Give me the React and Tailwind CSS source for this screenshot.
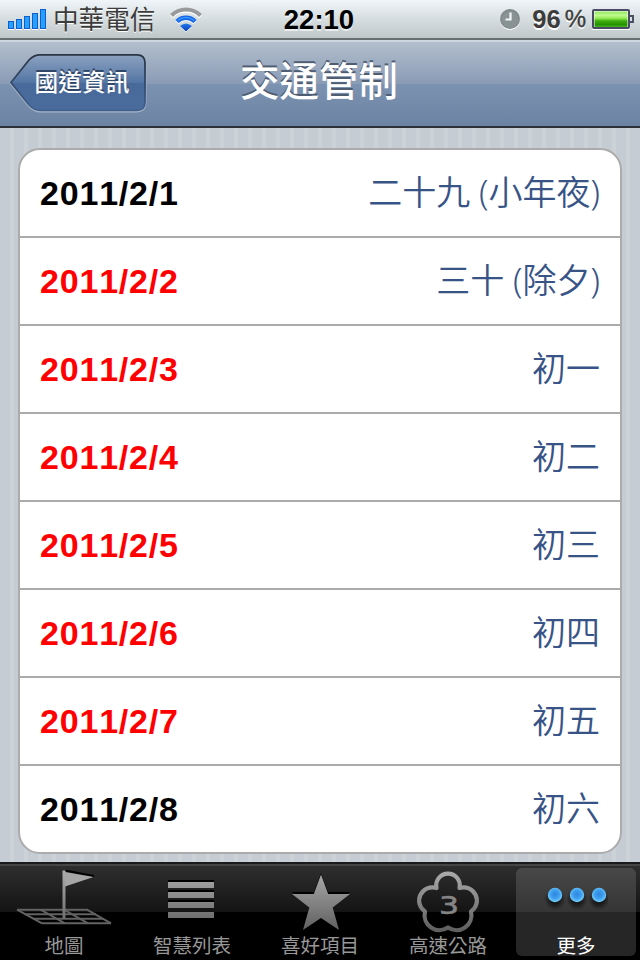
const days = [
  { date: '2011/2/1', lunar: '二十九 (小年夜)', holiday: false },
  { date: '2011/2/2', lunar: '三十 (除夕)', holiday: true },
  { date: '2011/2/3', lunar: '初一', holiday: true },
  { date: '2011/2/4', lunar: '初二', holiday: true },
  { date: '2011/2/5', lunar: '初三', holiday: true },
  { date: '2011/2/6', lunar: '初四', holiday: true },
  { date: '2011/2/7', lunar: '初五', holiday: true },
  { date: '2011/2/8', lunar: '初六', holiday: false },
];

const SignalIcon = () => (
  <svg width="40" height="22" viewBox="0 0 40 22">
    {[8, 10, 13, 16, 20].map((h, i) => (
      <g key={h}>
        <rect x={i * 8} y={21 - h} width="6" height={h} fill="#fff" />
        <rect x={i * 8} y={20 - h} width="6" height={h} fill="#0d5fd0" />
        <rect x={i * 8 + 1} y={21 - h} width="4" height={h - 2} fill="#26a0fb" />
      </g>
    ))}
  </svg>
);

const WifiIcon = () => (
  <svg width="34" height="26" viewBox="0 0 34 26" fill="none">
    <defs>
      <linearGradient id="wifi" x1="0" y1="15" x2="0" y2="24" gradientUnits="userSpaceOnUse">
        <stop offset="0" stopColor="#2a86fa" />
        <stop offset="1" stopColor="#0840b8" />
      </linearGradient>
    </defs>
    <path d="M2.5 9.8 A20.5 20.5 0 0 1 31.5 9.8" stroke="#fff" strokeWidth="4" />
    <path d="M2.5 8.5 A20.5 20.5 0 0 1 31.5 8.5" stroke="#999a9b" strokeWidth="4" />
    <path d="M8 15.5 A12.8 12.8 0 0 1 26 15.5" stroke="#fff" strokeWidth="4.4" />
    <path d="M8 14.5 A12.8 12.8 0 0 1 26 14.5" stroke="#1264e8" strokeWidth="4.4" />
    <path d="M8.7 13.8 A12 12 0 0 1 25.3 13.8" stroke="#3a96fa" strokeWidth="1.5" />
    <path d="M17 25.5 L11 19.5 Q17 14.5 23 19.5 Z" fill="#fff" />
    <path d="M17 24.5 L11 19 Q17 14 23 19 Z" fill="url(#wifi)" />
  </svg>
);

const AlarmIcon = () => (
  <svg width="22" height="22" viewBox="0 0 22 22">
    <circle cx="11" cy="12" r="10" fill="#fff" />
    <circle cx="11" cy="11" r="10" fill="#7f898a" />
    <circle cx="11" cy="11.5" r="8.5" fill="#899394" />
    <path d="M11.5 4.5 V11.5 H6.5" stroke="#f4f7f7" strokeWidth="2.2" fill="none" />
  </svg>
);

const BatteryIcon = () => (
  <svg width="42" height="22" viewBox="0 0 42 22">
    <defs>
      <linearGradient id="charge" x1="0" y1="0" x2="0" y2="1">
        <stop offset="0" stopColor="#8fe85a" />
        <stop offset="0.25" stopColor="#c0fa90" />
        <stop offset="0.45" stopColor="#8fe850" />
        <stop offset="0.6" stopColor="#3fae10" />
        <stop offset="0.85" stopColor="#249000" />
        <stop offset="1" stopColor="#43b81c" />
      </linearGradient>
    </defs>
    <rect x="0" y="2" width="38" height="19" rx="1.5" fill="#fff" />
    <rect x="1" y="1" width="36" height="18" rx="1" fill="#fff" stroke="#4b4a64" strokeWidth="2" />
    <rect x="2.5" y="2.5" width="33" height="15.5" fill="url(#charge)" />
    <path d="M38 7 H41 V13 H38" fill="none" stroke="#4b4f64" strokeWidth="2" />
  </svg>
);

const StatusBar = () => (
  <header className="flex h-10 items-start justify-between border-b-2 border-[#66716f] bg-linear-to-b from-[#eff5f8] to-[#bfc7c9] px-2">
    <div className="flex w-[276px] items-start">
      <div className="pt-[9px]">
        <SignalIcon />
      </div>
      <span className="ml-[5px] pt-1 text-[25.6px] leading-8 text-[#3c3c3c] [text-shadow:0_1px_0_#fff]">中華電信</span>
      <div className="ml-[14px] pt-[7px]">
        <WifiIcon />
      </div>
    </div>
    <time className="-ml-0.5 pt-1 text-[27.5px] leading-8 font-bold text-black [text-shadow:0_2px_0_#fff9]">22:10</time>
    <div className="flex w-[276px] items-start justify-end">
      <div className="pt-[8px]">
        <AlarmIcon />
      </div>
      <span className="ml-[11px] pt-[3px] text-[25.5px] leading-8 font-bold text-[#3c3c3c] [text-shadow:0_2px_0_#fff]">96</span>
      <span className="ml-1 pt-[3px] text-[24px] leading-8 text-[#3c3c3c] [text-shadow:0_2px_0_#fff] [-webkit-text-stroke:0.4px_#3c3c3c]">%</span>
      <div className="-mr-[2px] ml-[6px] pt-[9px]">
        <BatteryIcon />
      </div>
    </div>
  </header>
);

const BackButton = () => (
  <button className="relative block h-[60px] w-[138px] shrink-0">
    <svg className="absolute inset-0" width="138" height="60" viewBox="0 0 138 60">
      <defs>
        <linearGradient id="back" x1="0" y1="0" x2="0" y2="1">
          <stop offset="0" stopColor="#8ca2c0" />
          <stop offset="0.5" stopColor="#5375a4" />
          <stop offset="0.51" stopColor="#486a9b" />
          <stop offset="1" stopColor="#4a6c9c" />
        </linearGradient>
        <linearGradient id="backEdge" x1="0" y1="0" x2="0" y2="1">
          <stop offset="0" stopColor="#2b3442" />
          <stop offset="0.5" stopColor="#34496a" />
          <stop offset="1" stopColor="#41618f" />
        </linearGradient>
      </defs>
      <path d="M2 31 L20 8 Q25 2.5 31 2.5 H127 Q136.5 2.5 136.5 12 V49 Q136.5 58.5 127 58.5 H31 Q25 58.5 20 53 Z" fill="none" stroke="#a5b3c7" strokeWidth="2" />
      <path d="M2 29.5 L20 7 Q25 1.8 31 1.8 H128 Q136 1.8 136 10 V49 Q136 57.3 128 57.3 H31 Q25 57.3 20 52 Z" fill="url(#back)" stroke="url(#backEdge)" strokeWidth="1.8" />
    </svg>
    <span className="relative -ml-px block pl-[9px] text-[23.7px] leading-8 font-medium text-white [text-shadow:0_-2px_0_#2f4666]">國道資訊</span>
  </button>
);

const NavBar = () => (
  <nav className="flex h-[88px] border-b-2 border-[#2d3034] bg-[linear-gradient(#b4c0ce,#8a9bb5_44px,#7c92b1_44px,#6d83a3)] px-[9px] [box-shadow:inset_0_2px_0_#cdd5df]">
    <div className="w-[180px] pt-[13px]">
      <BackButton />
    </div>
    <h1 className="grow pt-[15px] text-center text-[39.5px] leading-[54px] font-medium text-white [text-shadow:0_-2px_0_#4f5d72]">交通管制</h1>
    <div className="w-[182px]" />
  </nav>
);

const FlagIcon = () => (
  <svg width="98" height="60" viewBox="0 0 98 60">
    <g stroke="#626262" strokeWidth="1.9" fill="none">
      <path d="M2 39.7 H73 M10 44.2 H81 M18 48.7 H88 M27 53.3 H96" />
      <path d="M2 39.7 L27 53.3 M25.5 39.7 L50 53.3 M49 39.7 L73 53.3 M72 39.7 L96 53.3" />
    </g>
    <path d="M50 0.5 L79 6" stroke="#000" strokeWidth="2" />
    <rect x="47.5" y="0.5" width="3" height="48" fill="url(#tabIcon)" />
    <path d="M50 2 L78.5 7 L50 16.5 Z" fill="#a6a6a6" />
  </svg>
);

const ListIcon = () => (
  <svg width="48" height="60" viewBox="0 0 48 60">
    <g fill="#000">
      <rect x="0" y="10" width="46" height="3" />
      <rect x="0" y="20" width="46" height="3" />
      <rect x="0" y="30" width="46" height="3" />
    </g>
    <path d="M0 12 H46 V18 H0 Z M0 22 H46 V28 H0 Z M0 32 H46 V38 H0 Z M0 42 H46 V48 H0 Z" fill="url(#tabIcon)" />
  </svg>
);

const StarIcon = () => (
  <svg className="ml-0.5" width="60" height="60" viewBox="0 0 60 60">
    <path d="M30 3 L37 22 H59 L41.5 36 L48 58 L30 46 L12 58 L18.5 36 L1 22 H23 Z" fill="#000" />
    <path d="M30 4.5 L37.2 24 H59 L41.7 37.5 L48 60 L30 48 L12 60 L18.3 37.5 L1 24 H22.8 Z" fill="url(#tabIcon)" />
  </svg>
);

const FlowerIcon = () => (
  <svg width="66" height="64" viewBox="0 0 66 64">
    <path
      d="M21.5 18 A11.8 11.8 0 1 1 44.5 18 A13.2 13.2 0 0 1 56 41.5 A15 15 0 0 1 33 57.5 A15 15 0 0 1 10 41.5 A13.2 13.2 0 0 1 21.5 18 Z"
      fill="none"
      stroke="url(#tabIcon)"
      strokeWidth="4.2"
      strokeLinejoin="round"
    />
    <text x="34" y="43.5" textAnchor="middle" fill="#858585" fontSize="25" fontFamily="DejaVu Sans" textLength="20" lengthAdjust="spacingAndGlyphs" stroke="#858585" strokeWidth="0.6">3</text>
  </svg>
);

const MoreIcon = () => (
  <svg width="64" height="60" viewBox="0 0 64 60">
    <defs>
      <radialGradient id="dot" cx="0.5" cy="0.45" r="0.6">
        <stop offset="0" stopColor="#2f86e2" />
        <stop offset="0.5" stopColor="#3f9fee" />
        <stop offset="1" stopColor="#7fdcff" />
      </radialGradient>
      <radialGradient id="dotShadow">
        <stop offset="0" stopColor="#000" />
        <stop offset="1" stopColor="#000" stopOpacity="0" />
      </radialGradient>
    </defs>
    {[11, 33, 55].map((x) => (
      <g key={x}>
        <circle cx={x} cy="29" r="11" fill="url(#dotShadow)" />
        <circle cx={x} cy="25" r="7.2" fill="url(#dot)" />
      </g>
    ))}
  </svg>
);

const tabs = [
  { label: '地圖', icon: <FlagIcon /> },
  { label: '智慧列表', icon: <ListIcon /> },
  { label: '喜好項目', icon: <StarIcon /> },
  { label: '高速公路', icon: <FlowerIcon /> },
  { label: '更多', icon: <MoreIcon />, active: true },
];

const TabBar = () => (
  <footer className="flex h-[98px] border-t-2 border-[#1a1a1c] bg-[linear-gradient(#464444_0_2px,#2e2e2e_2px,#141414_48px,#000_48px)]">
    {/* Shared vertical shading for the grey tab icons */}
    <svg className="absolute" width="0" height="0">
      <defs>
        <linearGradient id="tabIcon" x1="0" y1="0" x2="0" y2="60" gradientUnits="userSpaceOnUse">
          <stop offset="0" stopColor="#adadad" />
          <stop offset="1" stopColor="#606060" />
        </linearGradient>
      </defs>
    </svg>
    {tabs.map((tab) => (
      <div key={tab.label} className="w-32 px-1 pt-1">
        <div
          className={
            tab.active
              ? 'flex h-[88px] flex-col items-center rounded-md bg-[linear-gradient(#484848,#353535_44px,#262626_44px)] text-white'
              : 'flex h-[88px] flex-col items-center text-[#989898]'
          }
        >
          <div className="flex h-[65px] shrink-0 items-start justify-center pt-0.5">{tab.icon}</div>
          <span className="text-[19.5px] leading-[26px] whitespace-nowrap">{tab.label}</span>
        </div>
      </div>
    ))}
  </footer>
);

const App = () => {
  return (
    <div className="flex h-[960px] w-[640px] flex-col overflow-hidden bg-black font-['Liberation_Sans','Noto_Sans_CJK_TC',sans-serif]">
      <StatusBar />
      <NavBar />
      <main className="grow bg-[repeating-linear-gradient(90deg,#c5ccd4_0_10px,#cbd2d8_10px_14px)] px-[18px] pt-5">
        <ul className="divide-y-2 divide-[#ababab] overflow-hidden rounded-[22px] border-2 border-[#ababab] bg-white">
          {days.map((day, i) => (
            <li
              key={day.date}
              className={
                i === days.length - 1
                  ? 'flex h-[86px] items-center justify-between px-5 text-[34px]'
                  : 'flex h-[88px] items-center justify-between px-5 text-[34px]'
              }
            >
              <span
                className={
                  day.holiday
                    ? 'font-bold tracking-[0.8px] text-[#ff0000] [font-kerning:none]'
                    : 'font-bold tracking-[0.8px] text-black [font-kerning:none]'
                }
              >
                {day.date}
              </span>
              <span className="pb-0.5 font-['Noto_Sans','Noto_Sans_CJK_TC',sans-serif] font-[350] text-[#385487]">{day.lunar}</span>
            </li>
          ))}
        </ul>
      </main>
      <TabBar />
    </div>
  );
};

export default App;
